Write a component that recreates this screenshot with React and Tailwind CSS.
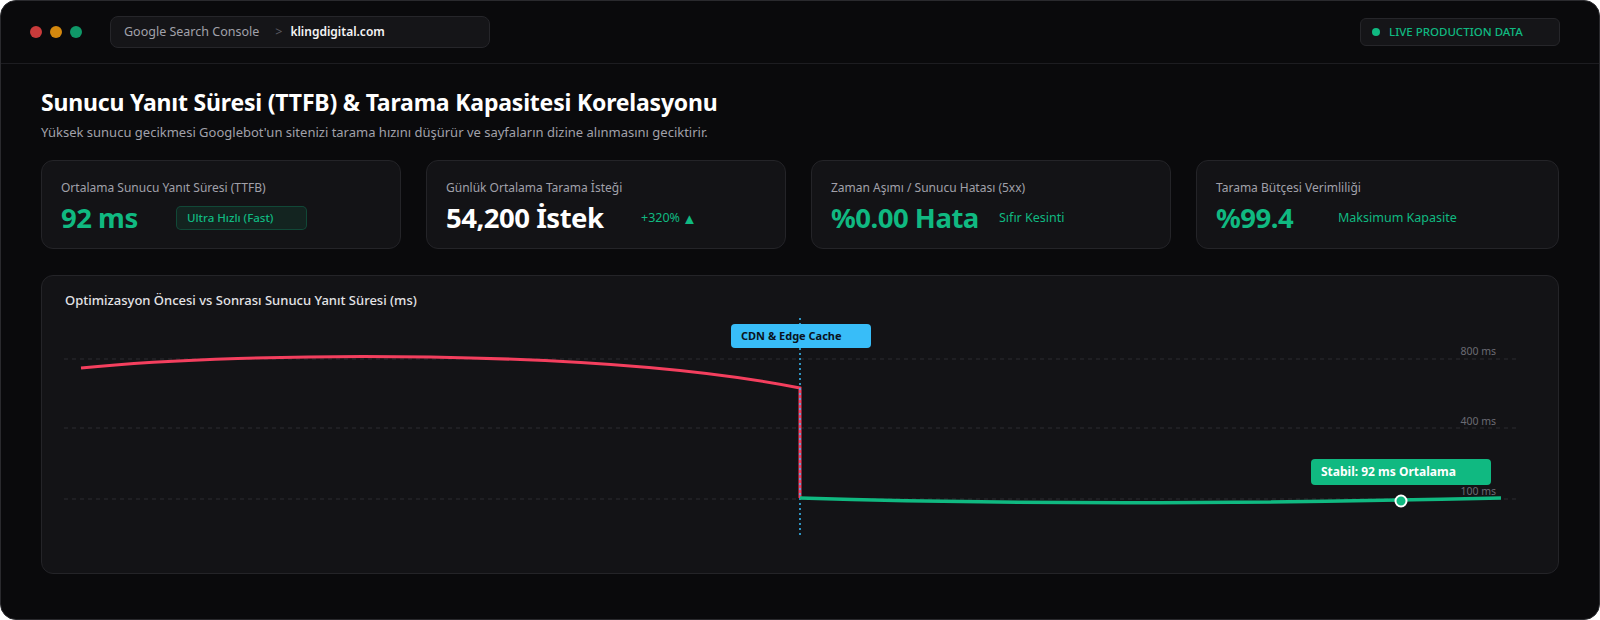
import React from "react";

function StatCard({ label, value, valueClass, valueW, side }) {
  return (
    <div className="h-[89px] rounded-xl border border-[#242428] bg-[#131316] px-[19px] pt-[19px]">
      <div className="text-[12px] leading-4 text-[#a1a1aa]">{label}</div>
      <div className="mt-[6px] flex h-8 items-center">
        <div className={`${valueW} shrink-0 text-[27.5px] font-bold leading-8 tracking-[-0.5px] ${valueClass}`}>{value}</div>
        {side}
      </div>
    </div>
  );
}

export default function App() {
  return (
    <div className="h-[620px] w-[1600px] bg-white font-['Noto_Sans',sans-serif]">
      <div className="h-[620px] w-[1600px] overflow-hidden rounded-2xl border border-[#2a2a2e] bg-[#0a0a0c]">
        {/* header */}
        <div className="flex h-[63px] items-center border-b border-[#1d1d21] pl-[29px] pr-[39px]">
          <div className="flex gap-2">
            <span className="h-3 w-3 rounded-full bg-[#c93b3b]" />
            <span className="h-3 w-3 rounded-full bg-[#d4880e]" />
            <span className="h-3 w-3 rounded-full bg-[#0f9868]" />
          </div>
          <div className="ml-7 flex h-8 w-[380px] items-center rounded-lg border border-[#26262a] bg-[#151518] pl-[13px] text-[12.5px]">
            <span className="text-[#a1a1aa]">Google Search Console</span>
            <span className="ml-[16px] text-[#5b5b63]">&gt;</span>
            <span className="ml-[8px] text-[12px] font-semibold text-[#f4f4f5]">klingdigital.com</span>
          </div>
          <div className="ml-auto flex h-7 w-[200px] items-center rounded-md border border-[#26262a] bg-[#151518] pl-[11px]">
            <span className="h-2 w-2 rounded-full bg-[#10b981]" />
            <span className="ml-[9px] text-[11.5px] font-medium text-[#10b981]">LIVE PRODUCTION DATA</span>
          </div>
        </div>

        {/* main */}
        <div className="px-10 pt-6">
          <h1 className="text-[23px] font-bold leading-7 tracking-[-0.2px] text-white">
            Sunucu Yanıt Süresi (TTFB) &amp; Tarama Kapasitesi Korelasyonu
          </h1>
          <p className="mt-[6px] text-[13px] leading-5 text-[#a1a1aa]">
            Yüksek sunucu gecikmesi Googlebot'un sitenizi tarama hızını düşürür ve sayfaların dizine alınmasını geciktirir.
          </p>

          <div className="mt-[18px] grid grid-cols-[360px_360px_360px_1fr] gap-[25px]">
            <StatCard
              label="Ortalama Sunucu Yanıt Süresi (TTFB)"
              value="92 ms"
              valueClass="text-[#10b981]"
              valueW="w-[115px]"
              side={
                <span className="flex h-[24px] w-[131px] items-center rounded-[5px] border border-[#10b981]/25 bg-[#10b981]/10 pl-[10px] text-[11.5px] font-medium text-[#10b981]">
                  Ultra Hızlı (Fast)
                </span>
              }
            />
            <StatCard
              label="Günlük Ortalama Tarama İsteği"
              value="54,200 İstek"
              valueClass="text-white"
              valueW="w-[195px]"
              side={
                <span className="flex items-center text-[12.5px] text-[#10b981]">
                  +320%<span className="ml-[2px] text-[15px] leading-none">▲</span>
                </span>
              }
            />
            <StatCard
              label="Zaman Aşımı / Sunucu Hatası (5xx)"
              value="%0.00 Hata"
              valueClass="text-[#10b981]"
              valueW="w-[168px]"
              side={<span className="text-[12.5px] text-[#10b981]">Sıfır Kesinti</span>}
            />
            <StatCard
              label="Tarama Bütçesi Verimliliği"
              value="%99.4"
              valueClass="text-[#10b981]"
              valueW="w-[122px]"
              side={<span className="text-[12.5px] text-[#10b981]">Maksimum Kapasite</span>}
            />
          </div>

          {/* chart panel */}
          <div className="mt-[26px] h-[299px] rounded-xl border border-[#242428] bg-[#131316]">
            <div className="h-[33px] px-[23px] pt-[14px] text-[13px] font-medium leading-5 text-[#e4e4e7]">
              Optimizasyon Öncesi vs Sonrası Sunucu Yanıt Süresi (ms)
            </div>
            <div className="relative h-[264px]">
              <svg width="1518" height="264" className="block">
                <g stroke="#2c2c31" strokeWidth="1" strokeDasharray="4 4">
                  <line x1="22" y1="50" x2="1475" y2="50" />
                  <line x1="22" y1="119" x2="1475" y2="119" />
                  <line x1="22" y1="190" x2="1475" y2="190" />
                </g>
                <g fill="#6b6b73" fontSize="10.5" textAnchor="end" fontFamily="Noto Sans, sans-serif">
                  <text x="1454" y="46">800 ms</text>
                  <text x="1454" y="116">400 ms</text>
                  <text x="1454" y="186">100 ms</text>
                </g>
                <path
                  d="M39 59 C 210 42, 560 40, 758 79 L 758 189"
                  fill="none"
                  stroke="#f43f5e"
                  strokeWidth="3"
                />
                <line x1="758" y1="9" x2="758" y2="229" stroke="#38bdf8" strokeWidth="1.5" strokeDasharray="2 3" />
                <path
                  d="M758 189 C 950 195, 1200 195, 1459 189"
                  fill="none"
                  stroke="#10b981"
                  strokeWidth="3.5"
                />
                <circle cx="1359" cy="192" r="5.5" fill="#10b981" stroke="#ffffff" strokeWidth="2" />
              </svg>
              <div className="absolute left-[689px] top-[15px] flex h-6 w-[140px] items-center rounded-[4px] bg-[#38bdf8] pl-[10px] text-[11px] font-bold text-[#0b1220]">
                CDN &amp; Edge Cache
              </div>
              <div className="absolute left-[1269px] top-[150px] flex h-[26px] w-[180px] items-center rounded-[4px] bg-[#10b981] pl-[10px] text-[12px] font-bold text-white">
                Stabil: 92 ms Ortalama
              </div>
            </div>
          </div>
        </div>
      </div>
    </div>
  );
}
